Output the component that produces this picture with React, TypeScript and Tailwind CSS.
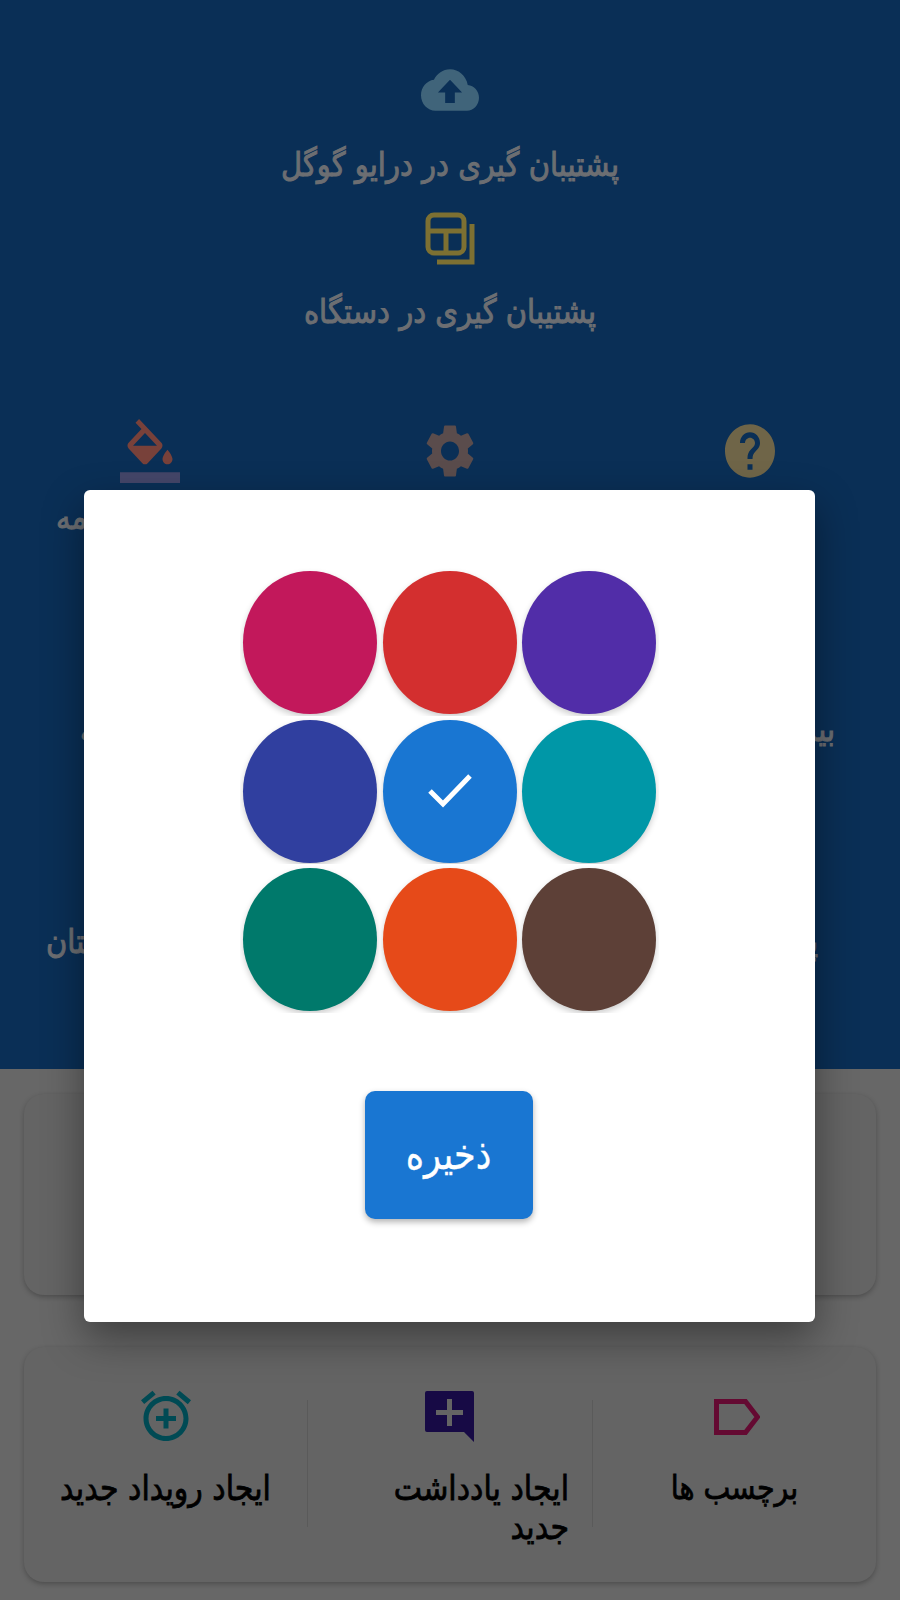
import React from 'react';

const colors = [
  'bg-[#c2185b]',
  'bg-[#d32f2f]',
  'bg-[#512da8]',
  'bg-[#303f9f]',
  'bg-[#1976d2]',
  'bg-[#0097a7]',
  'bg-[#00796b]',
  'bg-[#e64a19]',
  'bg-[#5d4037]',
];

function Swatch({ color, selected }: { color: string; selected: boolean }) {
  return (
    <div className="flex h-[148.67px] w-[139.7px] items-start justify-center overflow-hidden pt-[4px]">
      <div className={`flex h-[143px] w-[134px] items-center justify-center rounded-[50%] shadow-[0_3px_6px_rgba(0,0,0,0.2)] ${color}`}>
        {selected && (
          <svg viewBox="0 0 44 36" className="h-[36px] w-[44px] fill-none stroke-white" strokeWidth="5">
            <path d="M2 18l13 13L42 3" />
          </svg>
        )}
      </div>
    </div>
  );
}

// page colours are the dimmed ones seen behind the dialog
function Label({ children }: { children: React.ReactNode }) {
  return <span className="inline-block scale-y-[1.15] text-[29px] leading-[44px] text-[#6c6e72] [-webkit-text-stroke:0.9px_#6c6e72]">{children}</span>;
}

function Action({ children }: { children: React.ReactNode }) {
  return <div className="scale-y-[1.15] text-[30px] leading-[34px] text-black [-webkit-text-stroke:0.7px_black]">{children}</div>;
}

export default function App() {
  return (
    <div dir="rtl" className="relative h-[1600px] w-[900px] overflow-hidden bg-[#676767] font-['DejaVu_Sans',sans-serif]">
      <div className="h-[1069px] bg-[#0a2f56] pt-[59px]">
        <div className="flex flex-col items-center">
          <svg viewBox="0 0 24 24" preserveAspectRatio="none" className="h-[62px] w-[58px] fill-[#40647a]">
            <path d="M19.35 10.04C18.67 6.59 15.64 4 12 4 9.11 4 6.6 5.64 5.35 8.04 2.34 8.36 0 10.91 0 14c0 3.31 2.69 6 6 6h13c2.76 0 5-2.24 5-5 0-2.64-2.05-4.78-4.65-4.96zM14 13v4h-4v-4H7l5-5 5 5h-3z" />
          </svg>
          <div className="mt-[22px]"><Label>پشتیبان گیری در درایو گوگل</Label></div>
          <svg viewBox="0 0 51 54" className="mt-[25px] h-[54px] w-[51px] fill-none stroke-[#7d7032]" strokeWidth="5">
            <rect x="3" y="3" width="36" height="38" rx="6" />
            <path d="M3 19h36M21 19v22M12 50h35V12" />
          </svg>
          <div className="mt-[23px]"><Label>پشتیبان گیری در دستگاه</Label></div>
        </div>

        <div className="mt-[86px] grid grid-cols-3 justify-items-center">
          <svg viewBox="0 0 24 24" preserveAspectRatio="none" className="h-[64px] w-[60px] fill-[#6f6548]">
            <path d="M12 2C6.48 2 2 6.48 2 12s4.48 10 10 10 10-4.48 10-10S17.52 2 12 2zm1 17h-2v-2h2v2zm2.07-7.75l-.9.92C13.45 12.9 13 13.5 13 15h-2v-.5c0-1.1.45-2.1 1.17-2.83l1.24-1.26c.37-.36.59-.86.59-1.41 0-1.1-.9-2-2-2s-2 .9-2 2H8c0-2.21 1.79-4 4-4s4 1.79 4 4c0 .88-.36 1.68-.93 2.25z" />
          </svg>
          <svg viewBox="0 0 24 24" preserveAspectRatio="none" className="h-[64px] w-[60px] fill-[#5a4c4c]">
            <path d="M19.14 12.94c.04-.3.06-.61.06-.94 0-.32-.02-.64-.07-.94l2.03-1.58c.18-.14.23-.41.12-.61l-1.92-3.32c-.12-.22-.37-.29-.59-.22l-2.39.96c-.5-.38-1.03-.7-1.62-.94l-.36-2.54c-.04-.24-.24-.41-.48-.41h-3.84c-.24 0-.43.17-.47.41l-.36 2.54c-.59.24-1.13.57-1.62.94l-2.39-.96c-.22-.08-.47 0-.59.22L2.74 8.87c-.12.21-.08.47.12.61l2.03 1.58c-.05.3-.09.63-.09.94s.02.64.07.94l-2.03 1.58c-.18.14-.23.41-.12.61l1.92 3.32c.12.22.37.29.59.22l2.39-.96c.5.38 1.03.7 1.62.94l.36 2.54c.05.24.24.41.48.41h3.84c.24 0 .44-.17.47-.41l.36-2.54c.59-.24 1.13-.56 1.62-.94l2.39.96c.22.08.47 0 .59-.22l1.92-3.32c.12-.22.07-.47-.12-.61l-2.01-1.58zM12 15.6c-1.98 0-3.6-1.62-3.6-3.6s1.62-3.6 3.6-3.6 3.6 1.62 3.6 3.6-1.62 3.6-3.6 3.6z" />
          </svg>
          <svg viewBox="0 0 24 24" preserveAspectRatio="none" className="h-[64px] w-[60px]">
            <path fill="#78413a" d="M16.56 8.94L7.62 0 6.21 1.41l2.38 2.38-5.15 5.15c-.59.59-.59 1.54 0 2.12l5.5 5.5c.29.29.68.44 1.06.44s.77-.15 1.06-.44l5.5-5.5c.59-.58.59-1.53 0-2.12zM5.21 10L10 5.21 14.79 10H5.21zM19 11.5s-2 2.17-2 3.5c0 1.1.9 2 2 2s2-.9 2-2c0-1.33-2-3.5-2-3.5z" />
            <path fill="#444669" d="M0 20h24v4H0z" />
          </svg>
        </div>

        <div className="mt-[12px] flex justify-end pl-[56px]"><Label>تم برنامه</Label></div>
        <div className="mt-[168px] flex justify-between pl-[80px] pr-[65px]">
          <Label>بیشتر</Label>
          <Label>درباره برنامه</Label>
        </div>
        <div className="mt-[168px] flex justify-between pl-[46px] pr-[82px]">
          <Label>پیام به ما</Label>
          <Label>معرفی به دوستان</Label>
        </div>
      </div>

      <div className="px-[24px] pt-[25px]">
        <div className="h-[201px] rounded-[20px] bg-[#646464] shadow-[0_2px_5px_rgba(0,0,0,0.25)]" />
        <div className="mt-[52px] grid h-[235px] grid-cols-[283px_285px_284px] rounded-[20px] bg-[#646464] pt-[53px] shadow-[0_2px_5px_rgba(0,0,0,0.25)]">
          <div className="flex h-[127px] flex-col items-center">
            <svg viewBox="0 0 46 36" className="-mt-[1px] ml-[4px] h-[36px] w-[46px] shrink-0 fill-none stroke-[#640a32]" strokeWidth="5">
              <path d="M2.5 2.5h29l12 15.5-12 15.5h-29z" />
            </svg>
            <div className="mt-[37px] text-[28.5px]"><div className="scale-y-[1.15] leading-[34px] text-black [-webkit-text-stroke:0.7px_black]">برچسب ها</div></div>
          </div>
          <div className="flex h-[127px] flex-col border-r border-[#5a5a5a]">
            <svg viewBox="0 0 49 51" className="-mt-[9px] mr-[118px] h-[51px] w-[49px] shrink-0 fill-[#170a45]">
              <path fillRule="evenodd" d="M2 0h45a2 2 0 0 1 2 2v49L39 41H2a2 2 0 0 1-2-2V2a2 2 0 0 1 2-2zM22 8v11H11v5h11v11h5V24h11v-5H27V8z" />
            </svg>
            <div className="mr-[23px] mt-[32px]"><Action>ایجاد یادداشت<br />جدید</Action></div>
          </div>
          <div className="flex h-[127px] flex-col items-center border-r border-[#5a5a5a]">
            <svg viewBox="0 0 24 24" className="-mt-[14px] h-[60px] w-[60px] shrink-0 fill-[#004a54]">
              <path d="M7.88 3.39L6.6 1.86 2 5.71l1.29 1.53 4.59-3.85zM22 5.72l-4.6-3.86-1.29 1.53 4.6 3.86L22 5.72zM12 4c-4.97 0-9 4.03-9 9s4.02 9 9 9c4.97 0 9-4.03 9-9s-4.03-9-9-9zm0 16c-3.86 0-7-3.14-7-7s3.14-7 7-7 7 3.14 7 7-3.13 7-7 7zm1-11h-2v3H8v2h3v3h2v-3h3v-2h-3V9z" />
            </svg>
            <div className="mt-[26px]"><Action>ایجاد رویداد جدید</Action></div>
          </div>
        </div>
      </div>

      <div className="absolute left-[84px] top-[490px] flex h-[832px] w-[731px] flex-col items-center rounded-[6px] bg-white pt-[77px] shadow-[0_16px_40px_rgba(0,0,0,0.4)]">
        <div dir="ltr" className="flex w-[420px] flex-wrap justify-center">
          {colors.map((c) => (
            <Swatch key={c} color={c} selected={c === 'bg-[#1976d2]'} />
          ))}
        </div>
        <button className="mt-[78px] h-[128px] w-[168px] -translate-x-[1px] rounded-[10px] bg-[#1976d2] text-[35px] text-white shadow-[0_3px_6px_rgba(0,0,0,0.3)]">
          <span className="inline-block scale-y-[1.2] [-webkit-text-stroke:0.3px_white]">ذخیره</span>
        </button>
      </div>
    </div>
  );
}
